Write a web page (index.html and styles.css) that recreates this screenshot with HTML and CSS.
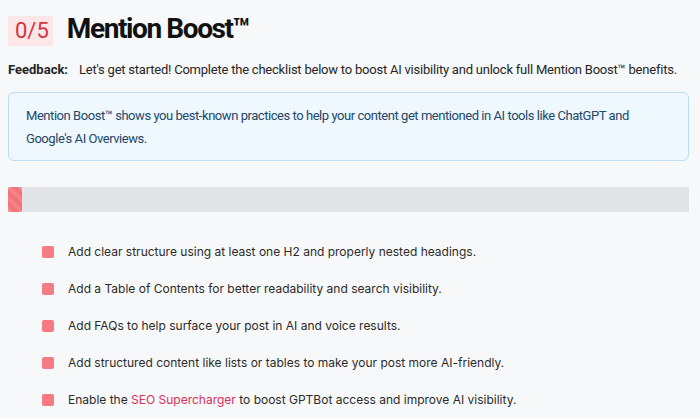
FILE: index.html
```html
<!DOCTYPE html>
<html lang="en">
<head>
  <meta charset="UTF-8" />
  <title>Mention Boost</title>
  <link rel="stylesheet" href="styles.css">
</head>
<body>
  <div class="panel">
    <h1 class="title"><span class="score">0/5</span> Mention Boost™</h1>

    <p class="feedback"><strong>Feedback:</strong> Let's get started! Complete the checklist below to boost AI visibility and unlock full Mention Boost™ benefits.</p>

    <div class="info">
      Mention Boost™ shows you best-known practices to help your content get mentioned in AI tools like ChatGPT and Google's AI Overviews.
    </div>

    <div class="progress"><div class="progress-fill" style="width:2%"></div></div>

    <ul class="checklist">
      <li><span class="mark"></span>Add clear structure using at least one H2 and properly nested headings.</li>
      <li><span class="mark"></span>Add a Table of Contents for better readability and search visibility.</li>
      <li><span class="mark"></span>Add FAQs to help surface your post in AI and voice results.</li>
      <li><span class="mark"></span>Add structured content like lists or tables to make your post more AI-friendly.</li>
      <li><span class="mark"></span>Enable the&nbsp;<a href="#">SEO Supercharger</a>&nbsp;to boost GPTBot access and improve AI visibility.</li>
    </ul>
  </div>
</body>
</html>
```

FILE: styles.css
```css
body { margin: 0; background: #f7f8fa; font-family: Inter, "Noto Sans", sans-serif; color: #1d1d1f; }
.panel { padding: 14px 11px 0 8px; }
.title { display: flex; align-items: baseline; gap: 14px; margin: 0; font-family: Roboto, sans-serif; font-size: 28px; font-weight: 700; letter-spacing: -1.4px; color: #111; line-height: 30px; }
.score { background: #fbe7e8; color: #d2343f; font-weight: 400; font-size: 22px; letter-spacing: 0; padding: 0 4px 0 7px; line-height: 30px; }
.feedback { margin: 15px 0 0; font-family: Roboto, sans-serif; font-size: 13px; line-height: 18px; letter-spacing: -0.22px; color: #262626; }
.feedback strong { font-weight: 700; letter-spacing: 0; margin-right: 8px; }
.info { margin-top: 13px; background: #eff7ff; border: 1px solid #bcdcf4; border-radius: 6px; padding: 11px 24px 10px 17px; font-family: Roboto, sans-serif; font-size: 13px; line-height: 23px; letter-spacing: -0.45px; color: #22486a; }
.progress { margin-top: 26px; height: 25px; background: #e2e4e8; }
.progress-fill { height: 100%; border-radius: 2px; background: repeating-linear-gradient(45deg, #f48286 0 4px, #f0747a 4px 8px); }
.checklist { list-style: none; margin: 21px 0 0; padding: 0 0 0 34px; font-size: 12px; color: #2b2b2b; }
.checklist li { display: flex; align-items: center; height: 37px; }
.mark { width: 12px; height: 12px; border-radius: 2px; background: #f47b82; margin-right: 14px; flex: none; }
.checklist a { color: #d8305a; text-decoration: none; }
```
